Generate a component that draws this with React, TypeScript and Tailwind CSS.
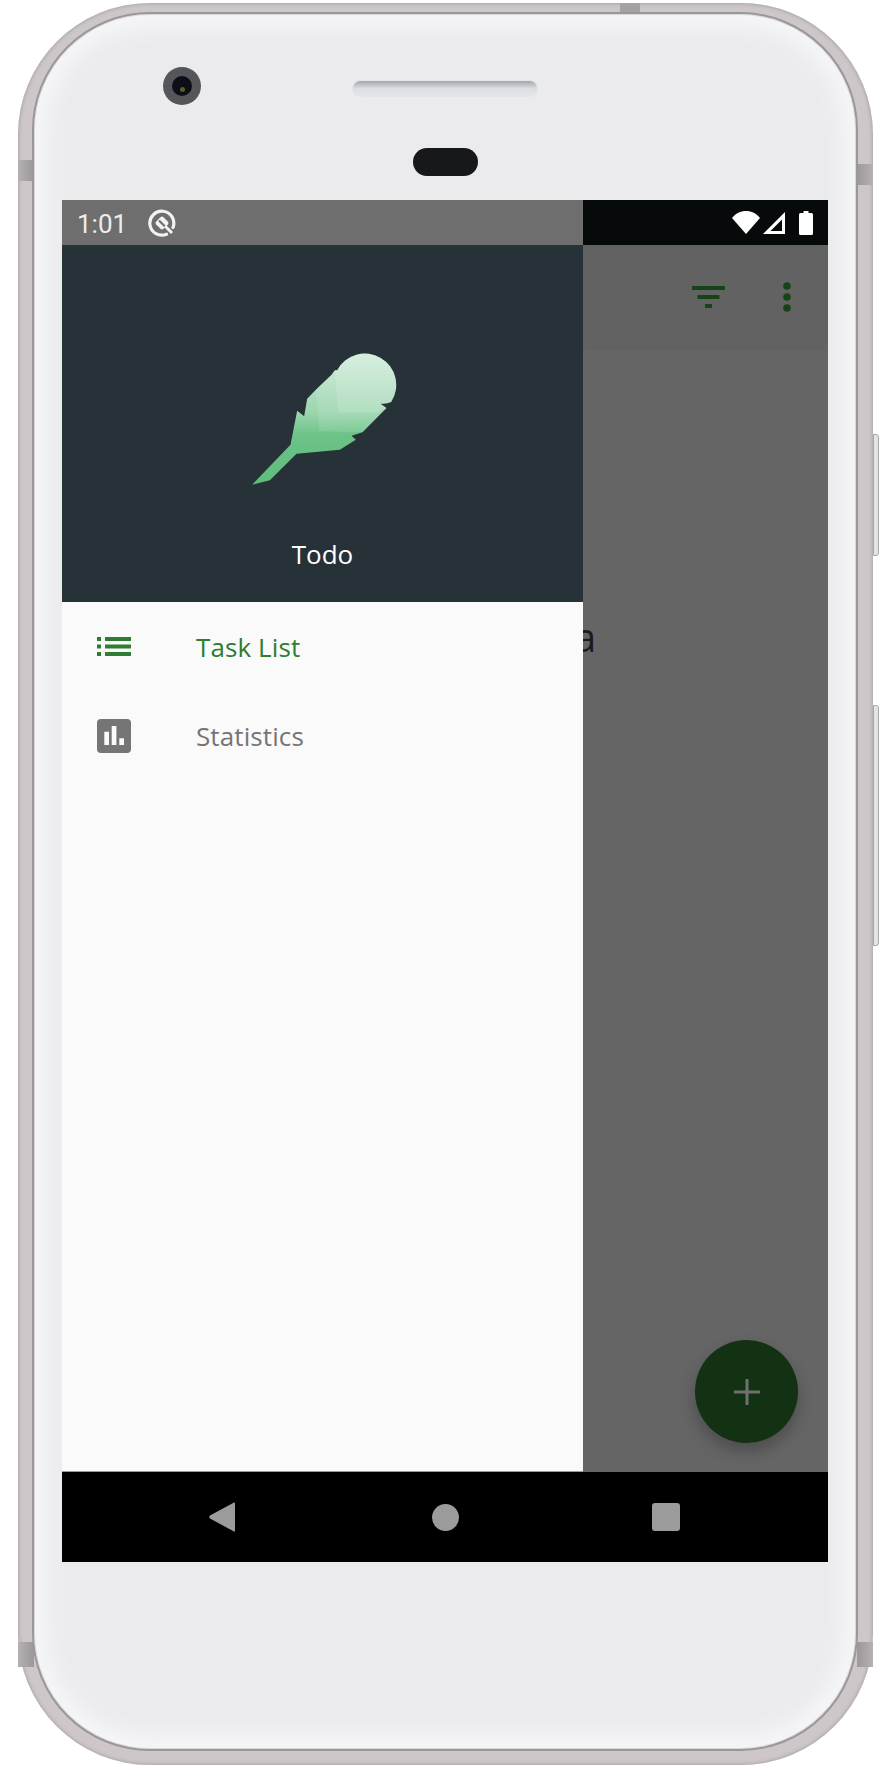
// App.tsx
const OPEN_SANS = "font-['Open_Sans',sans-serif]";

function Feather() {
  const outline =
    'M97 465 L150 452 L230 372 L360 360 L408 330 L395 318 L428 308 L500 235 L482 222 Q500 224 514 217 A94 94 0 1 0 352 122 L345 122 L335 135 L288 180 L262 207 L253 260 L232 243 L212 345 Z';
  return (
    <svg width="145" height="132" viewBox="97 70 434 396" className="ml-[4px]">
      <defs>
        <linearGradient id="feather" x1="0" y1="0" x2="0" y2="1">
          <stop offset="0" stopColor="#cbead6" />
          <stop offset="0.45" stopColor="#9bd6ae" />
          <stop offset="0.62" stopColor="#6cc388" />
          <stop offset="1" stopColor="#5fbd7b" />
        </linearGradient>
      </defs>
      <path d={outline} fill="url(#feather)" />
      {/* middle vane */}
      <path
        d="M288 180 L335 135 L345 122 L352 122 A94 94 0 1 1 514 217 Q500 224 482 222 L500 235 L428 308 L298 305 Z"
        fill="#ffffff"
        fillOpacity="0.1"
      />
      {/* top vane */}
      <path
        d="M345 122 L355 248 L472 248 L500 235 L482 222 Q500 224 514 217 A94 94 0 1 0 352 122 Z"
        fill="#ffffff"
        fillOpacity="0.14"
      />
    </svg>
  );
}

function StatusIcons() {
  return (
    <div className="flex items-center">
      <svg width="28" height="23" viewBox="0 0 28 23">
        <path d="M14 23 L0 7 C3.5 2.5 8.5 0 14 0 C19.5 0 24.5 2.5 28 7 Z" fill="#ffffff" />
      </svg>
      <svg width="22" height="22" viewBox="0 0 22 22" className="ml-[3px]">
        <path fillRule="evenodd" d="M22 0 V22 H0 Z M19 7.5 L7.5 19 H19 Z" fill="#ffffff" />
      </svg>
      <svg width="14" height="24" viewBox="0 0 14 24" className="ml-[14px]">
        <path d="M4.5 0 H9.5 V2 H12.5 Q14 2 14 3.5 V22.5 Q14 24 12.5 24 H1.5 Q0 24 0 22.5 V3.5 Q0 2 1.5 2 H4.5 Z" fill="#ffffff" />
      </svg>
    </div>
  );
}

function Drawer() {
  return (
    <aside className="flex w-[521px] shrink-0 flex-col border-b border-[#999999] bg-[#fafafa]">
      <div className="flex h-[357px] flex-col items-center bg-[#263238] pt-[108px]">
        <Feather />
        <p className={`mt-[51px] text-[26px] leading-[36px] text-white ${OPEN_SANS}`}>Todo</p>
      </div>
      <div className="flex h-[90px] items-center gap-[65px] pl-[35px]">
        <svg width="34" height="19" viewBox="0 0 34 19" fill="#2e7d32" className="mb-[2px]">
          <rect x="0" y="0" width="4" height="4" />
          <rect x="8" y="0" width="26" height="4" />
          <rect x="0" y="7.5" width="4" height="4" />
          <rect x="8" y="7.5" width="26" height="4" />
          <rect x="0" y="15" width="4" height="4" />
          <rect x="8" y="15" width="26" height="4" />
        </svg>
        <span className={`text-[26px] leading-[36px] tracking-[0.1px] text-[#2e7d32] ${OPEN_SANS}`}>Task List</span>
      </div>
      <div className="flex h-[88px] items-center gap-[65px] pl-[35px]">
        <svg width="34" height="34" viewBox="0 0 34 34">
          <rect width="34" height="34" rx="4" fill="#757575" />
          <rect x="7.3" y="12.7" width="4.7" height="13.3" fill="#fafafa" />
          <rect x="14.7" y="7" width="4.7" height="19" fill="#fafafa" />
          <rect x="22.3" y="19.3" width="4.7" height="6.7" fill="#fafafa" />
        </svg>
        <span className={`text-[26px] leading-[36px] tracking-[0.1px] text-[#757575] ${OPEN_SANS}`}>Statistics</span>
      </div>
    </aside>
  );
}

function MainPane() {
  return (
    <div className="relative flex-1 overflow-hidden bg-[#656565]">
      <div className="flex h-[102px] items-center justify-end gap-[58px] bg-[#626262] pr-[37px] pt-[2px] shadow-[0_2px_3px_rgba(0,0,0,0.04)]">
        <svg width="33" height="22" viewBox="0 0 33 22" fill="#174417">
          <rect x="0" y="0" width="33" height="4" />
          <rect x="5.5" y="9" width="22" height="4" />
          <rect x="13" y="18" width="7" height="4" />
        </svg>
        <svg width="8" height="30" viewBox="0 0 8 30" fill="#174417">
          <circle cx="4" cy="4" r="3.8" />
          <circle cx="4" cy="15" r="3.8" />
          <circle cx="4" cy="26" r="3.8" />
        </svg>
      </div>
      <p className={`ml-[-9px] mt-[262px] text-[40px] leading-[55px] text-[#1c1c1c] ${OPEN_SANS}`}>a</p>
      <button
        type="button"
        className="absolute bottom-[29px] right-[30px] flex h-[103px] w-[103px] items-center justify-center rounded-full bg-[#133113] shadow-[0_8px_16px_rgba(0,0,0,0.25)]"
      >
        <svg width="26" height="26" viewBox="0 0 26 26" fill="#707070">
          <rect x="11.5" y="0" width="3" height="26" />
          <rect x="0" y="11.5" width="26" height="3" />
        </svg>
      </button>
    </div>
  );
}

function Screen() {
  return (
    <div className="ml-[28px] flex w-[766px] flex-col">
      {/* Status bar */}
      <div className="flex h-[45px]">
        <div className="flex w-[521px] items-center bg-[#6e6e6e] pl-[15px]">
          <span className="mt-[2px] font-['Roboto',sans-serif] text-[26px] leading-none text-[#ececec]">1:01</span>
          <svg width="28" height="28" viewBox="0 0 28 28" className="ml-[21px]" fill="none">
            <path d="M18.5 25.2 A12 12 0 1 1 25 18.5" stroke="#f2f2f2" strokeWidth="3.2" strokeLinecap="round" />
            <path d="M14 7.5 Q14.8 7.5 15.5 8.2 L20 12.8 Q21 14 20 15.2 L15.5 19.8 Q14 21 12.5 19.8 L8 15.2 Q7 14 8 12.8 L12.5 8.2 Q13.2 7.5 14 7.5 Z" fill="#f2f2f2" />
            <path d="M11 11.5 L19 19.5" stroke="#6e6e6e" strokeWidth="2.2" />
            <path d="M17 17 L24 24" stroke="#f2f2f2" strokeWidth="3" />
          </svg>
        </div>
        <div className="flex flex-1 items-center justify-end bg-[#060a0b] pr-[15px]">
          <StatusIcons />
        </div>
      </div>
      {/* Middle */}
      <div className="flex h-[1227px]">
        <Drawer />
        <MainPane />
      </div>
      {/* Nav bar */}
      <div className="flex h-[90px] items-center bg-black pl-[147px]">
        <svg width="26" height="30" viewBox="0 0 26 30" fill="#9b9b9b">
          <path d="M25 0.5 Q26 0 26 1.5 V28.5 Q26 30 25 29.5 L1 16.5 Q-0.5 15 1 13.5 Z" />
        </svg>
        <div className="ml-[197px] h-[27px] w-[27px] rounded-full bg-[#9b9b9b]" />
        <div className="ml-[193px] h-[28px] w-[28px] rounded-[3px] bg-[#9b9b9b]" />
      </div>
    </div>
  );
}

export default function App() {
  return (
    <div className="h-[1792px] w-[884px] bg-white pl-[18px] pt-[3px]">
      <div className="relative h-[1762px] w-[855px] rounded-[132px] bg-[#cdc7ca] pb-[14px] pl-[14px] pr-[15px] pt-[9px] shadow-[inset_0_0_4px_#9a9497]">
        {/* Antenna bands and side buttons */}
        <div className="absolute left-0 top-[157px] h-[21px] w-[16px] bg-gradient-to-r from-[#b5b1b3] to-[#9c989a]" />
        <div className="absolute right-0 top-[161px] h-[21px] w-[16px] bg-gradient-to-l from-[#b5b1b3] to-[#9c989a]" />
        <div className="absolute bottom-[98px] left-0 h-[25px] w-[16px] bg-gradient-to-r from-[#b5b1b3] to-[#9c989a]" />
        <div className="absolute bottom-[98px] right-0 h-[25px] w-[16px] bg-gradient-to-l from-[#b5b1b3] to-[#9c989a]" />
        <div className="absolute left-[602px] top-0 h-[9px] w-[20px] bg-[#a6a2a4]" />
        <div className="absolute left-[855px] top-[431px] h-[122px] w-[6px] rounded-r-[3px] border border-[#a8a8a8] bg-[#e4e4e2]" />
        <div className="absolute left-[855px] top-[702px] h-[241px] w-[6px] rounded-r-[3px] border border-[#a8a8a8] bg-[#e4e4e2]" />

        <div className="relative h-full rounded-[118px] border-2 border-[#9a9699] bg-[#ebebed] shadow-[inset_0_0_0_1px_#dcd8da,inset_0_0_22px_12px_#f6f7f9]">
          {/* Camera */}
          <div className="absolute left-[129px] top-[53px] flex h-[38px] w-[38px] items-center justify-center rounded-full bg-[#55565a]">
            <div className="flex h-[20px] w-[20px] items-center justify-center rounded-full bg-[#0d0f18]">
              <div className="mt-[6px] h-[5px] w-[5px] rounded-full bg-[#5d5a22]" />
            </div>
          </div>
          {/* Earpiece and sensor */}
          <div className="flex h-[186px] flex-col items-center pt-[66px]">
            <div className="h-[17px] w-[186px] rounded-full border border-[#e4e5e8] bg-gradient-to-b from-[#a3a7ad] via-[#dcdee1] to-[#e4e5e8]" />
            <div className="mt-[51px] h-[28px] w-[65px] rounded-[14px] bg-[#17181b]" />
          </div>
          <Screen />
        </div>
      </div>
    </div>
  );
}
